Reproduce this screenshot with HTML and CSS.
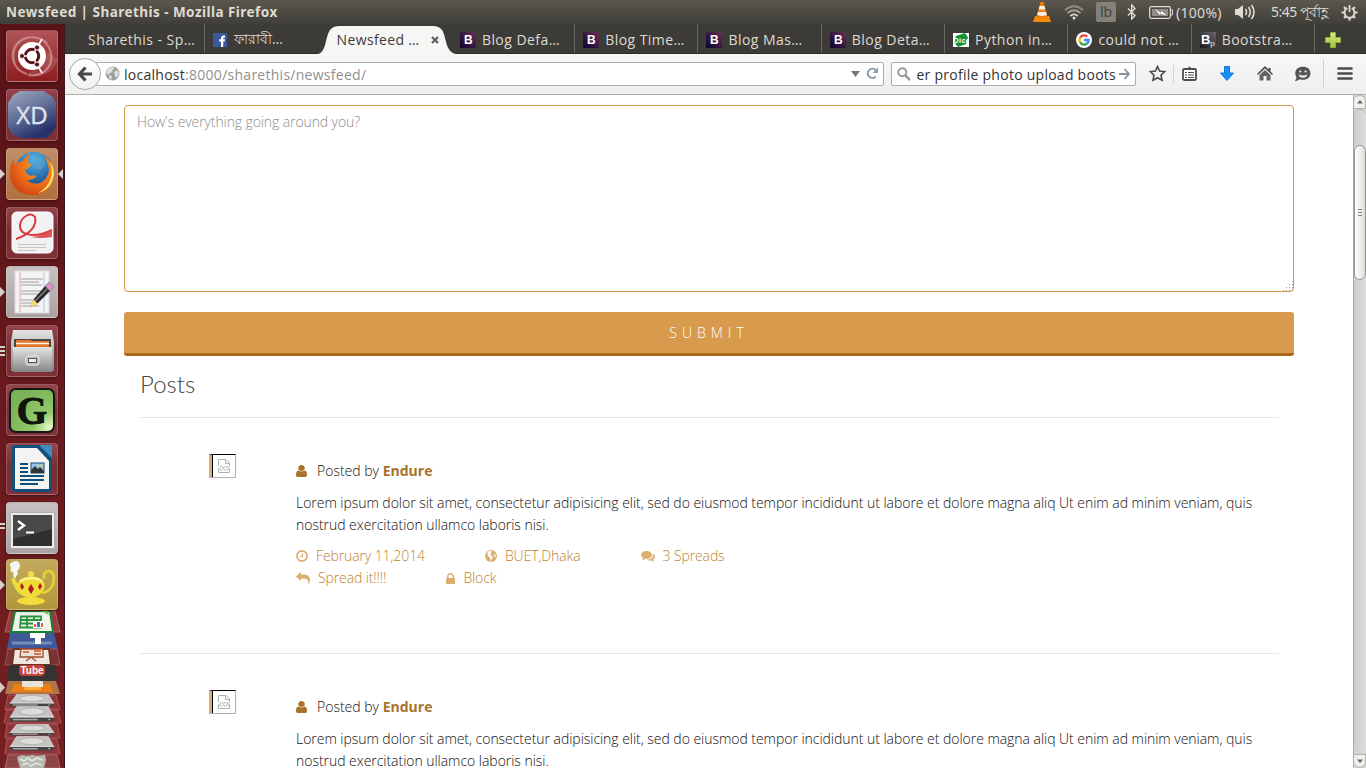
FILE: index.html
```html
<!DOCTYPE html>
<html lang="en">
<head>
<meta charset="utf-8">
<title>Newsfeed | Sharethis</title>
<link rel="stylesheet" href="styles.css">
</head>
<body>
<svg class="defs" width="0" height="0">
  <defs>
    <linearGradient id="boot" x1="1" y1="0" x2="0" y2="1"><stop offset="0" stop-color="#6a2d55"/><stop offset="1" stop-color="#0c0430"/></linearGradient>
    <linearGradient id="ink" x1="1" y1="0" x2="0" y2="1"><stop offset="0" stop-color="#66666c"/><stop offset="1" stop-color="#18181c"/></linearGradient>
    <linearGradient id="steel" x1="0" y1="0" x2="0" y2="1"><stop offset="0" stop-color="#e4e4e2"/><stop offset="1" stop-color="#858583"/></linearGradient>
    <linearGradient id="xd" x1="0" y1="0" x2=".5" y2="1"><stop offset="0" stop-color="#a2a9c0"/><stop offset=".55" stop-color="#5f6c96"/><stop offset="1" stop-color="#25316a"/></linearGradient>
    <radialGradient id="green" cx=".9" cy=".9" r="1"><stop offset="0" stop-color="#eaf9c8"/><stop offset=".35" stop-color="#93c968"/><stop offset="1" stop-color="#79b257"/></radialGradient>
    <radialGradient id="fox" cx=".65" cy=".3" r=".8"><stop offset="0" stop-color="#f8a51f"/><stop offset=".6" stop-color="#ea671b"/><stop offset="1" stop-color="#c8400e"/></radialGradient>
    <radialGradient id="sea" cx=".5" cy=".2" r=".8"><stop offset="0" stop-color="#58b4e4"/><stop offset="1" stop-color="#0b4287"/></radialGradient>
    <linearGradient id="plus" x1="0" y1="0" x2="0" y2="1"><stop offset="0" stop-color="#d9ea80"/><stop offset="1" stop-color="#9cc437"/></linearGradient>
    <symbol id="i-boot" viewBox="0 0 16 16"><rect width="16" height="16" rx="1" fill="url(#boot)"/><text x="4" y="12.4" class="fav-b">B</text></symbol>
    <symbol id="i-user" viewBox="256 128 1280 1536" preserveAspectRatio="none"><path d="M1536 1399q0 109-62.500 187t-150.500 78h-854q-88 0-150.500-78t-62.500-187q0-85 8.500-160.500t31.500-152 58.500-131 94-89 134.500-34.500q131 128 313 128t313-128q76 0 134.500 34.500t94 89 58.500 131 31.500 152 8.500 160.500zm-256-887q0 159-112.500 271.500t-271.500 112.500-271.500-112.500-112.500-271.500 112.500-271.500 271.500-112.500 271.500 112.500 112.500 271.500z"/></symbol>
    <symbol id="i-clock" viewBox="0 0 12 12"><circle cx="6" cy="6" r="5.100" fill="none" stroke="currentColor" stroke-width="1.700"/><path d="M6.400 3v3.500H3.800" fill="none" stroke="currentColor" stroke-width="1.100"/></symbol>
    <symbol id="i-globe" viewBox="0 0 12 12"><circle cx="6" cy="6" r="6"/><path fill="#fff" d="M3.600 1.300L5.500.900 7 1.800 5.800 2.900 6.600 3.600 5.200 4.300 6 5.400 7.600 6.200 7.800 8 6.300 9.600 6.200 11 5.400 10.600 5.200 8.200 4 7.200 3.300 5.600 2.500 4.600 2.400 3.200zM8.800 3.800L10.200 4.400 10.800 6 10.500 7.600 9.700 7 9.600 5.600 8.700 4.900z"/></symbol>
    <symbol id="i-comments" viewBox="0 0 14 12"><path d="M5.500 1C8.500 1 11 2.700 11 4.900S8.500 8.800 5.500 8.800L4.400 8.700Q2.900 9.900.9 10 2.100 9 2.100 7.900 0 6.700 0 4.900C0 2.700 2.500 1 5.500 1z"/><path d="M11.900 3.500Q14 4.700 14 6.500T11.900 9.500Q12 10.700 13.200 11.600 11.100 11.600 9.600 10.300 7.400 10.700 5.600 9.700 12 9.300 12 4.900z"/></symbol>
    <symbol id="i-reply" viewBox="0 0 14 12"><path d="M0 4.500L5 0V2.500H7C11.500 2.500 14 4.300 14 8Q14 10 12.800 12.300 12.400 12.200 12.500 11.700C12.800 8 11.200 6.500 7 6.500H5V9z"/></symbol>
    <symbol id="i-lock" viewBox="320 128 1152 1408"><path d="M640 768h512v-192q0-106-75-181t-181-75-181 75-75 181v192zm832 96v576q0 40-28 68t-68 28h-960q-40 0-68-28t-28-68v-576q0-40 28-68t68-28h32v-192q0-184 132-316t316-132 316 132 132 316v192h32q40 0 68 28t28 68z"/></symbol>
    <symbol id="i-broken" viewBox="0 0 12 14"><path d="M.5 7V.5H8L11.500 4V7L9.500 9 7.500 7 5.500 9 3.500 7 1.500 8.500M.5 9.500V13.500H11.500V9.500M1 9.500L3.500 11.500 5.500 9.500 7.500 11.500 9.500 9.500 11 11M7.500 1V4.500H11" fill="none" stroke="#b0b0b0"/></symbol>
    <symbol id="i-drive" viewBox="2 0 48 26" preserveAspectRatio="none"><path d="M10 1H43L49 19H3z" fill="#c4c4c2" stroke="#eee" stroke-width=".7"/><ellipse cx="26" cy="9" rx="13" ry="6" fill="#dcdcda" stroke="#a6a6a4"/><path d="M3 18H49V23Q49 25 47 25H5Q3 25 3 23z" fill="#444"/><path d="M3 18H49" stroke="#f4f4f4" stroke-width="1.500"/><path d="M6 22H32" stroke="#a9a9a9" stroke-width="2.500"/><circle cx="44" cy="22" r="1" fill="#ddd"/></symbol>
  </defs>
</svg>

<header class="panel">
  <span class="panel-title">Newsfeed | Sharethis - Mozilla Firefox</span>
  <div class="tray">
    <svg class="t-vlc" width="18" height="20" viewBox="0 0 18 20"><path d="M2 14H16L18 20H0z" fill="#f58a0a"/><path d="M7.500 0H10.500L14.500 15Q9 18 3.500 15z" fill="#f57c0a"/><path d="M6.600 4H11.400L12.300 7.500H5.700zM4.900 10H13.100L13.900 13Q9 15 4.100 13z" fill="#f3eee6"/></svg>
    <svg class="t-wifi" width="20" height="15" viewBox="0 0 20 15" fill="none" stroke-width="1.800"><path d="M1 5Q10-2.500 19 5" stroke="#8d8b83"/><path d="M3.500 8Q10 2.500 16.500 8" stroke="#a5a39b"/><path d="M6.300 11Q10 7.700 13.700 11" stroke="#dfdbd2"/><circle cx="10" cy="13" r="1.500" fill="#dfdbd2"/></svg>
    <span class="t-kbd">lb</span>
    <svg class="t-bt" width="10" height="16" viewBox="0 0 10 16" fill="none" stroke="#dfdbd2" stroke-width="1.400"><path d="M1 4.500L8 11.500 4.700 15V1L8 4.500 1 11.500"/></svg>
    <svg class="t-bat" width="24" height="13" viewBox="0 0 24 13"><rect x=".7" y=".7" width="20.600" height="11.600" rx="1.500" fill="none" stroke="#dfdbd2" stroke-width="1.300"/><rect x="3" y="3" width="16" height="7" fill="#8f8d86"/><path d="M22 4H23.500V9H22" fill="none" stroke="#dfdbd2"/><path d="M6 3L12 7 12 4.800 18 9.500 11 7.500V9z" fill="#fff"/></svg>
    <span class="t-pct">(100%)</span>
    <svg class="t-vol" width="21" height="16" viewBox="0 0 21 16"><path d="M0 5H3L8 1V15L3 11H0z" fill="#dfdbd2"/><path d="M10.500 5Q12.500 8 10.500 11M13.500 3Q17 8 13.500 13M16.500 1Q21.500 8 16.500 15" fill="none" stroke="#dfdbd2" stroke-width="1.600"/></svg>
    <span class="t-time">5:45 পূর্বাহ্ণ</span>
    <svg class="t-gear" width="17" height="17" viewBox="0 0 17 17"><path d="M6.300 4.200A5 5 0 1 0 10.700 4.200" fill="none" stroke="#dfdbd2" stroke-width="1.900"/><path d="M8.500 1V8" stroke="#dfdbd2" stroke-width="1.800"/><path d="M3.500 8.500H.5M16.500 8.500H13.500M5 12L3 14M12 12L14 14M8.500 13.500V16.500M5 5L3 3M12 5L14 3" stroke="#dfdbd2" stroke-width="2.200"/></svg>
  </div>
</header>

<div class="desktop">
  <nav class="launcher">
    <div class="tile tile-red"><svg viewBox="0 0 52 52"><path d="M9 34C1 10 27 0 41 13M35 9C54 22 45 49 22 45M21 44C1 38 3 12 20 8" fill="none" stroke="#e4b2b2" stroke-opacity=".55" stroke-width="2"/><path d="M52 30Q42 52 20 44L36 36 42 22z" fill="#fff" opacity=".13"/><circle cx="26" cy="26" r="14" fill="#fff"/><circle cx="26" cy="26" r="6.700" fill="none" stroke="#5a1417" stroke-width="3"/><path d="M26 26L36 43M26 26H12M26 26L36 9" stroke="#fff" stroke-width="1.500"/><circle cx="26" cy="26" r="5" fill="#fff"/><circle cx="16" cy="26" r="2.500" fill="#5a1417" stroke="#fff" stroke-width=".8"/><circle cx="31" cy="17.500" r="2.500" fill="#5a1417" stroke="#fff" stroke-width=".8"/><circle cx="31" cy="34.500" r="2.500" fill="#5a1417" stroke="#fff" stroke-width=".8"/></svg></div>
    <div class="tile tile-wine"><svg viewBox="0 0 52 52"><path d="M14 2H38L42 5 47 8 50 14V38L46 44 40 49H14L6 45 2 38V14L7 6z" fill="url(#xd)"/><text x="26" y="35" class="xd-text" text-anchor="middle">XD</text></svg></div>
    <div class="tile tile-tan"><svg viewBox="0 0 52 52"><circle cx="28" cy="23" r="19" fill="url(#sea)"/><path d="M27 10L36 8 40 16 34 22 29 19z" fill="#56a5d3" opacity=".55"/><path d="M7 12L9 17Q12 13 17 13 19 8 24 6 21 11 23 15 26 16 24 19L19 22Q20 26 25 28 30 26 30 29 26 33 21 32 26 37 34 35 42 31 43 22 42 14 38 8 48 15 48 27C47 40 38 47 27 47 13 47 4 38 4 26Q4 17 7 12z" fill="url(#fox)"/><path d="M43 13Q48 22 44 32 41 40 32 45 46 42 48 26 48 18 43 13z" fill="#fbdf5c"/></svg><i class="pip left"></i><i class="pip right"></i></div>
    <div class="tile tile-wine"><svg viewBox="0 0 52 52"><rect x="6" y="5" width="41" height="41" rx="5" fill="#f2f2f2" stroke="#fff"/><path d="M10 32C25 27 31 18 29 10 25 4 15 10 14 18 13 28 28 32 46 23" fill="none" stroke="#d93a40" stroke-width="2"/><path d="M25 30Q37 29 46 23V30Q34 32 25 30z" fill="#df5659"/><path d="M12 37.500H40M12 40.500H40M12 43.500H30" stroke="#c4c4c4"/></svg></div>
    <div class="tile tile-gray"><svg viewBox="0 0 52 52"><path d="M9 5H43V47H9z" fill="#f3f3f3" stroke="#ddd"/><path d="M15 13H37M15 16H33M15 19H36M15 25H37M15 28H35M15 34H31M15 37H29M15 40H33" stroke="#a0a0a0"/><path d="M14 6V46" stroke="#eaa0a0"/><path d="M38 6V46" stroke="#b5cbe6"/><path d="M27 34L24 41 31 38 45 24 40 19z" fill="#2b2b2b"/><path d="M24 41L27 33 32 38z" fill="#f3da7c"/><path d="M39 20L43 16 48 21 44 25z" fill="#d993c6" stroke="#777" stroke-width=".7"/><path d="M29 35L42 22" stroke="#888" stroke-width="1.300"/></svg><i class="pip left"></i></div>
    <div class="tile tile-wine"><svg viewBox="0 0 52 52"><path d="M7 5H46L48 17V46H5V17z" fill="url(#steel)"/><path d="M8 14H45V24H8z" fill="#4a4a48"/><path d="M10 15H24L26 16H43V25H10z" fill="#e2742c"/><path d="M10 18.500H43" stroke="#fff5e8" stroke-width="1.500"/><path d="M7 22H46V47H7z" fill="url(#steel)"/><rect x="20" y="31" width="13" height="9" rx="2" fill="#bbb" stroke="#ececec"/><rect x="22.500" y="33.500" width="8" height="4" fill="#eee" stroke="#555"/></svg><i class="dash d1"></i><i class="dash d2"></i><i class="dash d3"></i></div>
    <div class="tile tile-wine"><svg viewBox="0 0 52 52"><rect x="4" y="5" width="44" height="43" rx="6" fill="url(#green)" stroke="#171717" stroke-width="2"/><text x="26" y="40" text-anchor="middle" class="g-text">G</text></svg></div>
    <div class="tile tile-wine"><svg viewBox="0 0 52 52"><path d="M9 2H33L46 14V46Q46 49 43 49H9Q6 49 6 46V5Q6 2 9 2z" fill="#12507c"/><path d="M9 5H31L43 18V46H9z" fill="#f3f3f1"/><path d="M33 2H46V15z" fill="#3c8bc0"/><path d="M14 21H22M14 25H22M14 29H22M14 33H38M14 37H38M14 41H32" stroke="#12507c" stroke-width="1.900"/><rect x="25" y="20" width="13" height="10" fill="#96c7e8" stroke="#12507c"/><path d="M25 30V27L29 23 32 26 34 24 38 28V30z" fill="#333"/><circle cx="35" cy="22.500" r="1.200" fill="#f5c542"/></svg></div>
    <div class="tile tile-gray"><svg viewBox="0 0 52 52"><rect x="4.500" y="10.500" width="44" height="36" fill="#ececea" stroke="#b0b0ae"/><rect x="7" y="13" width="39" height="31" fill="#2e302e"/><path d="M7 13H46V27L7 37z" fill="#484a47"/><path d="M12 19L18 23.500 12 28" fill="none" stroke="#fff" stroke-width="2.400"/><path d="M20 30.500H28" stroke="#fff" stroke-width="2"/></svg><i class="dash d1"></i><i class="dash d2"></i></div>
    <div class="tile tile-gold"><svg viewBox="0 0 52 52"><path d="M9 20Q6 17 8 14 3 13 5 9 2 4 7 3 12 0 14 6 14 10 11 12 13 15 10 17z" fill="#f6f6f2"/><path d="M38 20Q37 12 43 12 50 14 47 25 44 33 36 34" fill="none" stroke="#e8d232" stroke-width="2.500"/><path d="M5 20L8 19 12 25Q13 18 25 17 38 18 39 27 37 35 29 38H21Q10 36 5 20z" fill="#f0dc39"/><path d="M14 22Q26 16 36 22" stroke="#fff3a0" fill="none" stroke-width="2"/><circle cx="25" cy="15" r="3" fill="#f2df4c"/><ellipse cx="25" cy="42" rx="14" ry="4" fill="#f2dd3d"/><path d="M25 25L28 30 25 35 22 30zM16 24L18 28 16 31 14 27zM34 24L36 27 34 31 32 28z" fill="#ad1d20"/></svg><i class="pip left"></i></div>
    <svg class="stack" width="65" height="157" viewBox="0 611 65 157">
      <path d="M10 611H55L60 632H5z" fill="#963c3f" stroke="#ad6367"/><path d="M15 611H50L53 632H11z" fill="#eef3ec" stroke="#18822a" stroke-width="2"/><path d="M39 610H47L49 615z" fill="#6ccc51"/><path d="M21 616.500H41V627.500H20zM20 620H42M20 623.500H42M27 616V627M34 616V627" fill="none" stroke="#26953c" stroke-width="1.800"/><path d="M33 621H44V628H33z" fill="#fff"/><path d="M34 627V624H36V627zM41 627V623H43V627z" fill="#db622f"/><path d="M37 627V622H40V627z" fill="#3c6fb5"/>
      <path d="M10 633H54L58 649H7z" fill="#3e5a98"/><path d="M12 643H52" stroke="#788cb7" stroke-width="3"/><path d="M30 633H45V638H41V644H35V638H30z" fill="#fff"/>
      <path d="M8 649H57L60 665H5z" fill="#793236" stroke="#a35357"/><path d="M14 649H49L51 665H12z" fill="#ece7df" stroke="#6f321d" stroke-width="2"/><path d="M21 649H43V657H20zM26 661L31 657 36 661" fill="#e8e4dd" stroke="#a44a2d" stroke-width="1.300"/><path d="M23 652H29M34 651H41M34 654H41" stroke="#d67848" stroke-width="2"/>
      <path d="M9 665H55L58 681H7z" fill="#343434"/><rect x="19" y="665" width="26" height="11" rx="4" fill="#c4403e"/><text x="32" y="674" class="tube" text-anchor="middle">Tube</text>
      <path d="M8 681H56L60 694H5z" fill="#b07549"/><path d="M14 684H50L53 692H11z" fill="#ed7e12"/><path d="M22 681H43L43 687H22z" fill="#e9e4da"/><path d="M25 687H41V690H24z" fill="#ffad42"/>
      <path d="M8 695H56L60 710H5zM7 709H57L61 723H4zM7 724H57L60 738H5zM7 739H57L60 754H5z" fill="#913438" stroke="#aa555a"/>
      <use href="#i-drive" x="9" y="694" width="46" height="13"/><use href="#i-drive" x="9" y="706" width="46" height="16"/><use href="#i-drive" x="9" y="724" width="46" height="12"/><use href="#i-drive" x="9" y="736" width="46" height="15"/>
      <path d="M8 755H57L60 768H5z" fill="#8d4548" stroke="#a76a6b"/><path d="M17 757L22 755 27 756 32 755 37 756 45 755 46 760 44 768H20L18 761z" fill="#b5b8b0"/><path d="M20 759L24 761 28 758 32 761 37 758 43 760M22 765L27 763 31 766 36 763 42 765" fill="none" stroke="#e4e6df" stroke-width="1.500"/>
      <path d="M0 682L5 687.500 0 693z" fill="#d8ccca"/>
    </svg>
  </nav>

  <main class="window">
    <div class="tabs">
      <div class="tab"><span>Sharethis - Sp…</span></div>
      <div class="tab no-rule fb"><svg width="14" height="14" viewBox="0 0 14 14"><rect width="14" height="14" fill="#3b5998"/><path d="M8 14V8.500H6.200V6.300H8V5Q8 2.500 10.500 2.500H12V4.700H11Q10.200 4.700 10.200 5.500V6.300H12L11.700 8.500H10.200V14z" fill="#fff"/></svg><span>ফারাবী…</span></div>
      <div class="tab active"><svg class="tab-shape" width="140" height="28" viewBox="0 0 140 28"><path d="M0 28C10 28 8 8 14 3Q17 0 22 0H116Q122 0 125 4C130 12 128 27 140 28z" fill="#f6f6f5"/></svg><span>Newsfeed …</span><svg class="close" width="8" height="8" viewBox="0 0 8 8"><path d="M1 1L7 7M7 1L1 7" stroke="#606060" stroke-width="2.200"/></svg></div>
      <div class="tab"><svg width="16" height="16"><use href="#i-boot"/></svg><span>Blog Defa…</span></div>
      <div class="tab"><svg width="16" height="16"><use href="#i-boot"/></svg><span>Blog Time…</span></div>
      <div class="tab"><svg width="16" height="16"><use href="#i-boot"/></svg><span>Blog Mas…</span></div>
      <div class="tab"><svg width="16" height="16"><use href="#i-boot"/></svg><span>Blog Deta…</span></div>
      <div class="tab"><svg width="16" height="16" viewBox="0 0 16 16"><rect width="16" height="14" y="1" fill="#fff"/><path d="M3 4L12 1 15 5.500 13 12 5 15 1 10z" fill="#109235"/><text x=".5" y="10.500" class="dice">Dice</text></svg><span>Python in…</span></div>
      <div class="tab"><svg width="16" height="16" viewBox="0 0 16 16"><circle cx="8" cy="8" r="8" fill="#fff"/><g fill="none" stroke-width="2.300"><path d="M4.200 5.500A4.600 4.600 0 0 1 11.300 4.800" stroke="#ea4335"/><path d="M4.200 5.500A4.600 4.600 0 0 0 4.200 10.500" stroke="#fbbc05"/><path d="M4.200 10.500A4.600 4.600 0 0 0 11 11.500" stroke="#34a853"/><path d="M11 11.500Q12.600 10.300 12.600 8H8" stroke="#4285f4"/></g></svg><span>could not …</span></div>
      <div class="tab"><svg width="16" height="16" viewBox="0 0 16 16"><rect width="16" height="16" fill="url(#ink)"/><text x="1" y="12" class="fav-big">B</text><text x="10" y="13.500" class="fav-p">p</text></svg><span>Bootstra…</span></div>
      <svg class="plus" width="16" height="16" viewBox="0 0 16 16"><path d="M5.500.5H10.500V5.500H15.500V10.500H10.500V15.500H5.500V10.500H.5V5.500H5.500z" fill="url(#plus)" stroke="#8fae3c"/></svg>
    </div>

    <div class="toolbar">
      <button class="back"><svg width="16" height="16" viewBox="0 0 16 16"><path d="M8.500 1.500L2.500 8 8.500 14.500M3 8H15" fill="none" stroke="#484846" stroke-width="3.200"/></svg></button>
      <div class="url">
        <svg width="15" height="15" viewBox="0 0 15 15"><circle cx="7.500" cy="7.500" r="6.900" fill="#9c9c9c"/><path d="M4 1.500L8 1 9.500 3 7 4.500 7.500 6 5 7 3.500 9 1 7 1.500 4zM9 6L12 4 14 7 12 12 10 10zM4 9L7 10 6 14 4 12z" fill="#dedede"/></svg>
        <span class="addr"><b>localhost</b>:8000/sharethis/newsfeed/</span>
        <svg class="drop" width="9" height="6" viewBox="0 0 9 6"><path d="M0 0H9L4.500 6z" fill="#777"/></svg>
        <svg class="reload" width="13" height="13" viewBox="0 0 13 13"><path d="M9.800 9.500A4.600 4.600 0 1 1 9.500 3" fill="none" stroke="#8d9bad" stroke-width="2"/><path d="M6.500 6H12V.5z" fill="#8d9bad"/></svg>
      </div>
      <div class="search">
        <svg width="14" height="14" viewBox="0 0 14 14"><circle cx="5.300" cy="5.300" r="4" fill="none" stroke="#999" stroke-width="1.900"/><path d="M8.300 8.300L13 13" stroke="#999" stroke-width="2.500"/></svg>
        <span class="query"><span>ser profile photo upload boots</span></span>
        <svg width="12" height="12" viewBox="0 0 12 12"><path d="M0 6H10M5.500 1L10 6 5.500 11" fill="none" stroke="#8792a0" stroke-width="1.800"/></svg>
      </div>
      <div class="tools">
        <svg class="star" width="17" height="17" viewBox="0 0 17 17"><path d="M8.500 1.500L10.600 6.100 15.700 6.700 12 10.200 13 15.200 8.500 12.700 4 15.200 5 10.200 1.300 6.700 6.400 6.100z" fill="none" stroke="#4c4c4b" stroke-width="1.600"/></svg>
        <i class="vline short"></i>
        <svg class="list" width="15" height="15" viewBox="0 0 15 15"><rect x="1" y="3" width="13" height="11" rx="1.200" fill="#fff" stroke="#4c4c4b" stroke-width="1.800"/><path d="M4.500 4V2H6Q7.500-1 9 2H10.500V4z" fill="#4c4c4b"/><path d="M3 6.500H5M6 6.500H12M3 9H5M6 9H12M3 11.500H5M6 11.500H12" stroke="#4c4c4b" stroke-width="1.200"/></svg>
        <svg class="down" width="14" height="15" viewBox="0 0 14 15"><path d="M4.500.5H9.500V7H13.500L7 14.500.5 7H4.500z" fill="#1691fb" stroke="#0a76dc"/></svg>
        <svg class="home" width="16" height="15" viewBox="0 0 16 15"><path d="M8 0L11.500 3.500V2H13.500V5.500L16 8 15 9 8 2.500 1 9 0 8z" fill="#4c4c4b"/><path d="M2.500 9L8 4 13.500 9V14.500H9.500V10H6.500V14.500H2.500z" fill="#646463"/></svg>
        <svg class="chat" width="17" height="16" viewBox="0 0 17 16"><path d="M9 .8C13.500.8 16.500 3.500 16.500 7.300S13.500 13.800 9 13.800Q7 13.800 5.500 13.200 4 15.200.8 15 2.600 13.500 2.400 11 1.200 9.300 1.200 7.300C1.200 3.500 4.500.8 9 .8z" fill="#555554"/><circle cx="6.300" cy="5.500" r="1.100" fill="#f2f2f1"/><circle cx="11.500" cy="5.500" r="1.100" fill="#f2f2f1"/><path d="M4.500 8.500Q9 10.500 13.500 8.500 12.500 11.800 9 11.800T4.500 8.500z" fill="#f2f2f1"/></svg>
        <i class="vline"></i>
        <svg class="menu" width="16" height="13" viewBox="0 0 16 13"><path d="M1.500 1.500H14.500M1.500 6.500H14.500M1.500 11.500H14.500" stroke="#4c4c4b" stroke-width="2.700" stroke-linecap="round"/></svg>
      </div>
    </div>

    <div class="viewport">
      <section class="page">
        <form class="composer">
          <textarea placeholder="How's everything going around you?"></textarea>
          <svg class="grip" width="11" height="11" viewBox="0 0 11 11"><path d="M9 1.500h1M9 4.500h1M6 4.500h1M9 7.500h1M6 7.500h1M3 7.500h1M9 10.500h1M6 10.500h1M3 10.500h1M0 10.500h1" stroke="#999"/></svg>
          <button class="submit" type="button">SUBMIT</button>
        </form>
        <div class="posts">
          <h2>Posts</h2>
          <article class="post">
            <div class="avatar"><svg width="12" height="14"><use href="#i-broken"/></svg></div>
            <div class="post-body">
              <div class="author"><svg width="11" height="12"><use href="#i-user"/></svg><span>Posted by <b>Endure</b></span></div>
              <p>Lorem ipsum dolor sit amet, consectetur adipisicing elit, sed do eiusmod tempor incididunt ut labore et dolore magna aliq Ut enim ad minim veniam, quis nostrud exercitation ullamco laboris nisi.</p>
              <div class="meta"><a><svg width="12" height="12"><use href="#i-clock"/></svg>February 11,2014</a><a><svg width="12" height="12"><use href="#i-globe"/></svg>BUET,Dhaka</a><a><svg width="14" height="12"><use href="#i-comments"/></svg>3 Spreads</a></div>
              <div class="meta"><a><svg width="14" height="12"><use href="#i-reply"/></svg>Spread it!!!!</a><a><svg width="9" height="11"><use href="#i-lock"/></svg>Block</a></div>
            </div>
          </article>
          <article class="post">
            <div class="avatar"><svg width="12" height="14"><use href="#i-broken"/></svg></div>
            <div class="post-body">
              <div class="author"><svg width="11" height="12"><use href="#i-user"/></svg><span>Posted by <b>Endure</b></span></div>
              <p>Lorem ipsum dolor sit amet, consectetur adipisicing elit, sed do eiusmod tempor incididunt ut labore et dolore magna aliq Ut enim ad minim veniam, quis nostrud exercitation ullamco laboris nisi.</p>
            </div>
          </article>
        </div>
      </section>
      <div class="scrollbar">
        <div class="sb-btn up"><svg width="6" height="4" viewBox="0 0 6 4"><path d="M0 3.500L3 0 6 3.500z" fill="#666"/></svg></div>
        <div class="sb-track"><div class="sb-thumb"><i></i><i></i><i></i></div></div>
        <div class="sb-btn down-btn"><svg width="6" height="4" viewBox="0 0 6 4"><path d="M0 .5L3 4 6 .5z" fill="#666"/></svg></div>
      </div>
    </div>
  </main>
</div>
</body>
</html>
```
FILE: styles.css
```css
* { box-sizing: border-box; }
body { margin: 0; width: 1366px; height: 768px; overflow: hidden; display: flex; flex-direction: column; background: #fff; font-family: "Open Sans", "Noto Sans", sans-serif; }
svg { display: block; flex: none; }
.defs { position: absolute; }
i { display: block; flex: none; }

/* top panel */
.panel { height: 24px; flex: none; display: flex; align-items: center; justify-content: space-between; padding: 0 8px 0 6px; background: linear-gradient(#5b574d, #3f3e39); color: #dfdbd2; font-family: "Noto Sans", "Open Sans", sans-serif; }
.panel-title { font-size: 13.500px; font-weight: 700; white-space: nowrap; letter-spacing: .46px; }
.tray { display: flex; align-items: center; font-size: 14px; white-space: nowrap; }
.t-wifi { margin-left: 13px; }
.t-kbd { margin-left: 12px; width: 20px; height: 20px; border-radius: 2px; background: #838179; color: #45433e; font-size: 14px; line-height: 20px; text-align: center; }
.t-bt { margin-left: 11px; }
.t-bat { margin-left: 12px; }
.t-pct { margin-left: 3px; width: 47px; letter-spacing: .3px; }
.t-vol { margin-left: 12px; }
.t-time { margin-left: 15px; width: 58px; padding-top: 2px; overflow: hidden; letter-spacing: -.5px; }
.t-gear { margin-left: 12px; }

.desktop { flex: 1; min-height: 0; display: flex; }

/* launcher */
.launcher { width: 65px; flex: none; padding: 6px 0 0 0; display: flex; flex-direction: column; gap: 7px; overflow: hidden; background: linear-gradient(#591318, #691a1e 50%, #761f21); border-right: 1px solid #42151a; }
.tile { position: relative; flex: none; width: 52px; height: 52px; margin-left: 6px; border-radius: 4px; border: 1px solid rgba(255,255,255,.2); box-shadow: 0 1px 3px rgba(0,0,0,.4); }
.tile > svg { width: 52px; height: 52px; margin: -1px; }
.tile-red { background: linear-gradient(#b05558, #8e1d1f); }
.tile-wine { background: linear-gradient(#93444a, #742c31 50%, #7e3137); }
.tile-tan { background: linear-gradient(#c08e68, #b26f3e); }
.tile-gray { background: linear-gradient(#c6c0c0, #aaa1a2); }
.tile-gold { height: 51px; margin-top: -2px; margin-bottom: -6px; background: linear-gradient(#c2aa5c, #b0973d); }
.pip { position: absolute; top: 20px; border: 5px solid transparent; }
.pip.left { left: -7px; border-left-color: #d9cfcd; border-right: 0; }
.pip.right { right: -6px; border-right-color: #d9cfcd; border-left: 0; }
.dash { position: absolute; left: -7px; width: 5px; height: 2px; background: #d9cfcd; }
.d1 { top: 20px; } .d2 { top: 24px; } .d3 { top: 28px; }
.xd-text { font: 24px "Open Sans", sans-serif; fill: #dfe3ec; stroke: #dfe3ec; stroke-width: .4px; }
.g-text { font: 700 39px "Liberation Serif", serif; fill: #10150e; stroke: #10150e; }
.tube { font: 700 10px "Liberation Sans", sans-serif; fill: #fff; }

/* browser window */
.window { flex: 1; min-width: 0; display: flex; flex-direction: column; }
.tabs { height: 30px; flex: none; display: flex; padding-left: 17px; background: #3c3b37; border-bottom: 1px solid #2c2b28; }
.tab { position: relative; width: 123.300px; flex: none; display: flex; align-items: center; gap: 6px; padding: 2px 0 0 8px; color: #dfdbd2; font-size: 14px; white-space: nowrap; border-right: 1px solid #696761; letter-spacing: .45px; }
.tab:first-child { padding-left: 6px; }
.tab.fb { letter-spacing: -.1px; }
.tab.fb svg { margin-right: 1px; }
.tab.no-rule { border-right-color: transparent; }
.tab.active { color: #3c3c3c; border-right-color: transparent; letter-spacing: .35px; }
.tab.active > span, .close { position: relative; }
.close { margin-left: 5px; }
.tab-shape { position: absolute; left: -12px; top: 2px; }
.plus { margin: 8px 0 0 10px; }
.fav-b { font: 700 12px "Liberation Sans", sans-serif; fill: #fff; }
.fav-big { font: 700 13px "Liberation Sans", sans-serif; fill: #fff; }
.fav-p { font: 700 8px "Liberation Sans", sans-serif; fill: #bbb; }
.dice { font: 700 7px "Liberation Sans", sans-serif; fill: #fff; }

.toolbar { height: 41px; flex: none; display: flex; align-items: center; padding: 0 13px 1px 4px; background: linear-gradient(#f7f7f6, #f0efed); border-bottom: 1px solid #b1afac; }
.back { position: relative; width: 32px; height: 32px; flex: none; padding: 0; border: 1px solid #a3a9b0; border-radius: 50%; background: linear-gradient(#fff, #f1f1f0); display: flex; align-items: center; justify-content: center; }
.url { width: 788px; height: 24px; flex: none; margin-left: -5px; padding: 0 4px 0 8px; display: flex; align-items: center; background: #fff; border: 1px solid #b0aeab; border-radius: 0 2px 2px 0; }
.addr { flex: 1; margin-left: 4px; padding-top: 1px; font-size: 14px; color: #8f8f8f; letter-spacing: .27px; }
.addr b { color: #333; font-weight: 400; }
.reload { margin-left: 6px; }
.search { width: 245px; height: 24px; flex: none; margin-left: 7px; padding: 0 4px 0 5px; display: flex; align-items: center; background: #fff; border: 1px solid #b0aeab; border-radius: 2px; }
.query { flex: 1; min-width: 0; margin: 0 3px 0 5px; padding-top: 1px; display: flex; justify-content: flex-end; overflow: hidden; white-space: nowrap; font-size: 14px; color: #333; letter-spacing: .26px; }
.tools { flex: 1; display: flex; align-items: center; }
.star { margin-left: 13px; }
.vline { width: 1px; height: 30px; margin-left: 12px; background: #cfd2d5; }
.vline.short { height: 18px; margin-left: 7px; }
.list { margin-left: 8px; }
.down { margin-left: 23px; }
.home { margin-left: 23px; }
.chat { margin-left: 21px; }
.menu { margin-left: 13px; }

.viewport { flex: 1; min-height: 0; display: flex; }
.page { flex: 1; min-width: 0; overflow: hidden; padding: 10px 59px 0; background: #fff; font-size: 14px; font-weight: 300; line-height: 22px; color: #111; }
.composer { position: relative; display: flex; flex-direction: column; gap: 20px; }
textarea { width: 1170px; height: 187px; padding: 5px 12px; border: 1px solid #d4984c; border-radius: 4px; resize: none; font: 300 14px/22px "Open Sans", sans-serif; letter-spacing: -.1px; outline: 0; background: #fff; }
textarea::placeholder { color: #8c8c8c; }
.grip { position: absolute; left: 1159px; top: 175px; }
.submit { width: 1170px; height: 44px; padding: 1px 0 0; border: 0; border-bottom: 3px solid #a8691b; border-radius: 3px; background: #d89a4d; color: #fff; font: 300 14px/22px "Open Sans", sans-serif; letter-spacing: 5px; }
.posts { margin: 0 15px; }
.posts h2 { margin: 0; height: 61px; padding: 15px 0 0 1px; font: 300 24px/26px Lato, sans-serif; color: #444; }
.post { height: 236px; padding: 36px 0 0 70px; border-top: 1px solid #f0e6dc; display: flex; }
.avatar { width: 27px; height: 24px; flex: none; display: flex; align-items: center; justify-content: center; border: 1px solid #b0b0b0; border-top-color: #000; border-left: 3px solid #dcae70; box-shadow: inset 1px 0 #000; }
.post-body { flex: 1; margin-left: 60px; padding-top: 6px; }
.author { display: flex; align-items: center; gap: 10px; }
.author svg { fill: #a8722a; }
.author b { color: #a8722a; font-weight: 700; }
.post p { margin: 10px 0 9px; letter-spacing: -.037px; }
.meta { display: flex; gap: 60px; color: #bd7f30; letter-spacing: -.11px; }
.meta a { display: flex; align-items: center; gap: 8px; }
.meta svg { color: #dcae70; fill: #dcae70; }

.scrollbar { width: 13px; flex: none; display: flex; flex-direction: column; background: #dbd9d7; border-left: 1px solid #aaa8a5; }
.sb-btn { height: 14px; flex: none; display: flex; align-items: center; justify-content: center; background: #f0efee; border: 1px solid #b3b1ae; border-left: 0; }
.up { border-radius: 6px 6px 0 0; }
.down-btn { border-radius: 0 0 6px 6px; }
.sb-track { flex: 1; padding-top: 35px; background: linear-gradient(90deg, #cfcdcb, #dedddb); border-radius: 6px; border-top: 1px solid #b3b1ae; }
.sb-thumb { width: 12px; height: 135px; border: 1px solid #989693; border-radius: 6px; background: linear-gradient(90deg, #fff, #f1f0ef 50%, #dcdad8); display: flex; flex-direction: column; align-items: center; justify-content: center; gap: 2px; }
.sb-thumb i { width: 4px; height: 1px; background: #888; }
```
